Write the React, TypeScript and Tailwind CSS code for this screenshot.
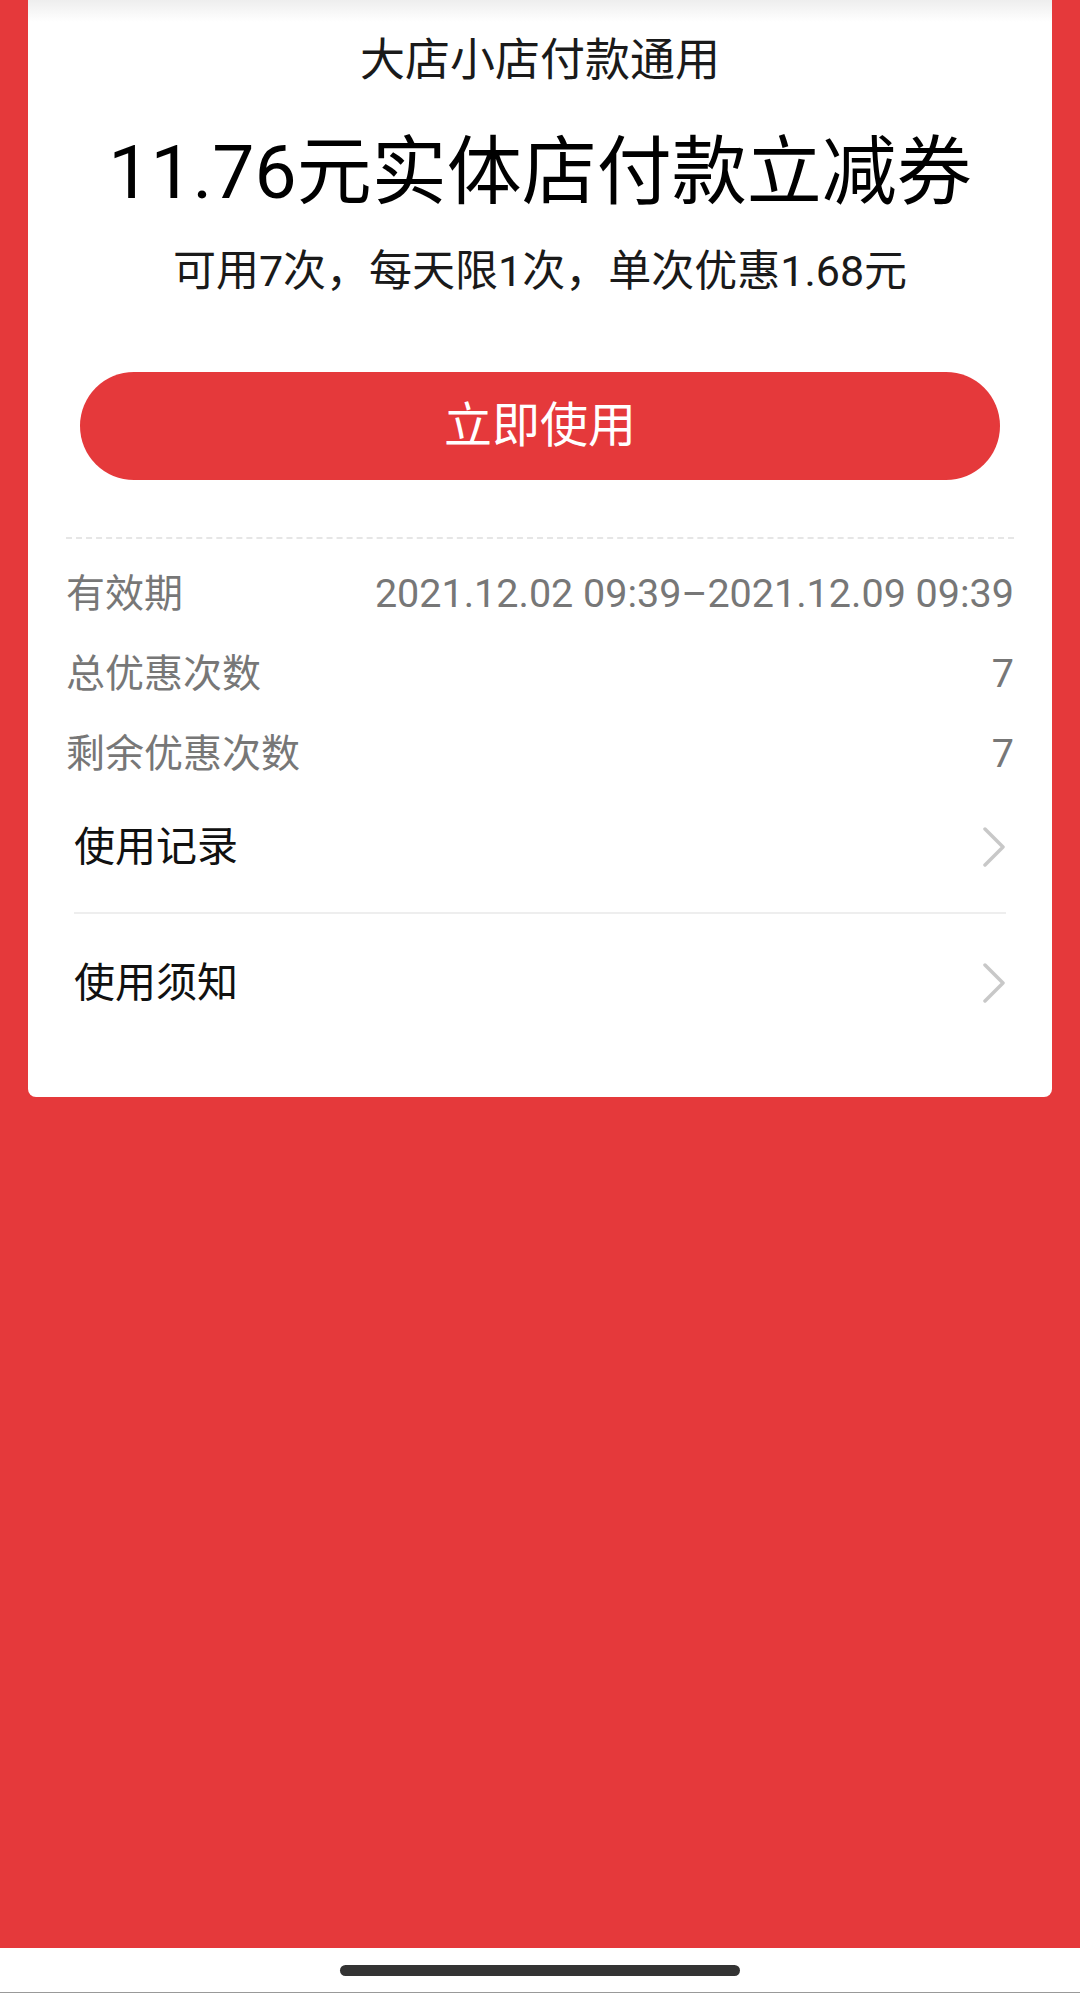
import { ReactNode } from 'react';

const FONT = '[font-family:Roboto,"Noto_Sans_CJK_SC",sans-serif]';

function InfoRow({ label, value }: { label: string; value: string }) {
  return (
    <div className="h-[80px] flex items-center justify-between text-[39px] text-[#777777] leading-none">
      <span>{label}</span>
      <span className="text-[39.5px]">{value}</span>
    </div>
  );
}

function Chevron() {
  return (
    <svg width="24" height="40" viewBox="0 0 24 40" fill="none" className="shrink-0">
      <polyline points="3,2 21,20 3,38" stroke="#c8c8c8" strokeWidth="3.5" strokeLinecap="round" strokeLinejoin="round" />
    </svg>
  );
}

function LinkRow({ children, className }: { children: ReactNode; className: string }) {
  return (
    <div className={`flex items-center justify-between text-[41px] text-[#111111] leading-none ${className}`}>
      <span>{children}</span>
      <Chevron />
    </div>
  );
}

export default function App() {
  return (
    <div className={`h-[1993px] flex flex-col bg-[#e5393b] ${FONT}`}>
      <div className="mx-[28px] rounded-b-[8px] bg-[linear-gradient(to_bottom,#eeeeee_0px,#ffffff_22px)] pt-[31px] pb-[45px]">
        <div className="text-center text-[45px] leading-[60px] text-[#1a1a1a]">大店小店付款通用</div>
        <div className="mt-[36px] text-center text-[75px] leading-[90px] text-black">11.76元实体店付款立减券</div>
        <div className="mt-[26px] text-center text-[43px] leading-[56px] text-[#1a1a1a]">可用7次，每天限1次，单次优惠1.68元</div>

        <div className="px-[38px]">
          <button className="mt-[73px] mx-[14px] w-[920px] h-[108px] rounded-full bg-[#e5393b] text-white text-[48px] leading-none">
            立即使用
          </button>

          <div className="mt-[57px] border-t-2 border-dashed border-[#e6e6e6]" />

          <div className="mt-[15px]">
            <InfoRow label="有效期" value="2021.12.02 09:39–2021.12.09 09:39" />
            <InfoRow label="总优惠次数" value="7" />
            <InfoRow label="剩余优惠次数" value="7" />
          </div>

          <div className="px-[8px]">
            <LinkRow className="h-[106px]">使用记录</LinkRow>
            <div className="mt-[12px] border-t-2 border-[#eeeeee]" />
            <LinkRow className="h-[138px]">使用须知</LinkRow>
          </div>
        </div>
      </div>

      <div className="flex-1" />

      <div className="h-[45px] bg-white flex items-center justify-center border-b border-[#999999]">
        <div className="w-[400px] h-[11px] rounded-full bg-[#333333]" />
      </div>
    </div>
  );
}
